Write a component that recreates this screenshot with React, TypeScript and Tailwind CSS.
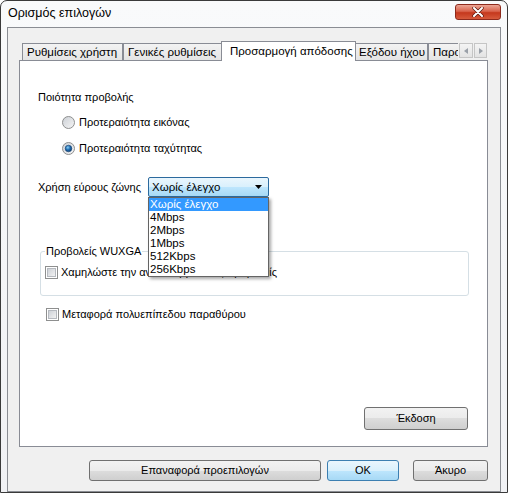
import React from 'react';

const font = "font-['Liberation_Sans','Noto_Sans',sans-serif]";

function Radio({ checked }: { checked?: boolean }) {
  return (
    <svg width="13" height="13" viewBox="0 0 13 13">
      <defs>
        <linearGradient id={checked ? 'rg1' : 'rg0'} x1="0" y1="0" x2="1" y2="1">
          <stop offset="0" stopColor="#cbcfd5" />
          <stop offset="1" stopColor="#f6f6f6" />
        </linearGradient>
        <radialGradient id="dot" cx="0.4" cy="0.35" r="0.7">
          <stop offset="0" stopColor="#8ad0f5" />
          <stop offset="0.5" stopColor="#1f6bb0" />
          <stop offset="1" stopColor="#0c3f75" />
        </radialGradient>
      </defs>
      <circle cx="6.5" cy="6.5" r="6" fill={`url(#${checked ? 'rg1' : 'rg0'})`} stroke="#8e8f8f" strokeWidth="1" />
      {checked && <circle cx="6.5" cy="6.5" r="3.3" fill="url(#dot)" stroke="#17406d" strokeWidth="0.6" />}
    </svg>
  );
}

function Checkbox() {
  return (
    <svg width="13" height="13" viewBox="0 0 13 13">
      <defs>
        <linearGradient id="cb" x1="0" y1="0" x2="1" y2="1">
          <stop offset="0" stopColor="#cbcfd5" />
          <stop offset="1" stopColor="#f4f4f4" />
        </linearGradient>
      </defs>
      <rect x="0.5" y="0.5" width="12" height="12" fill="#fff" stroke="#8e8f8f" />
      <rect x="2.5" y="2.5" width="8" height="8" fill="url(#cb)" stroke="#b5b9bf" strokeWidth="1" />
    </svg>
  );
}

function Button({ label, def, className }: { label: string; def?: boolean; className: string }) {
  return (
    <div
      className={`flex items-center justify-center rounded-[3px] border text-[11px] text-black ${
        def
          ? 'border-[#3c7fb1] bg-[linear-gradient(#eaf6fd_0%,#d9f0fc_50%,#bee6fd_50%,#a7d9f5_100%)]'
          : 'border-[#707070] bg-[linear-gradient(#f2f2f2_0%,#ebebeb_50%,#dddddd_50%,#cfcfcf_100%)]'
      } ${className}`}
    >
      {label}
    </div>
  );
}

const tabs = ['Ρυθμίσεις χρήστη', 'Γενικές ρυθμίσεις', 'Προσαρμογή απόδοσης', 'Εξόδου ήχου', 'Παρουσίαση'];
const widths = ['w-[101px]', 'w-[100px]', 'w-[135px]', 'w-[74px]', 'w-[80px]'];
const options = ['Χωρίς έλεγχο', '4Mbps', '2Mbps', '1Mbps', '512Kbps', '256Kbps'];

export default function App() {
  return (
    <div className={`${font} w-[508px] h-[493px] flex flex-col rounded-t-[7px] border border-[#3a3a3a] bg-[linear-gradient(#f9fafb,#f0f1f4)] text-black`}>
      {/* title bar */}
      <div className="h-[26px] flex items-start justify-between shrink-0">
        <div className="pl-[7px] pt-[5px] text-[12.5px] leading-[15px]">Ορισμός επιλογών</div>
        <div className="mt-[3px] mr-[6px] w-[46px] h-[16px] rounded-[3px] border border-[#8d2a1c] bg-[linear-gradient(#eba595_0%,#d9634c_45%,#c5381d_55%,#d65a3c_100%)] flex items-center justify-center">
          <svg width="12" height="10" viewBox="0 0 12 10">
            <path d="M2 1 L10 9 M10 1 L2 9" stroke="#5b1a10" strokeWidth="3.4" strokeLinecap="round" />
            <path d="M2 1 L10 9 M10 1 L2 9" stroke="#ffffff" strokeWidth="2" strokeLinecap="round" />
          </svg>
        </div>
      </div>

      {/* client area */}
      <div className="mx-[6px] flex-1 border border-[#8a8d93] bg-[#f0f0f0] pl-[11px] pr-[12px] pt-[13px] pb-[5px] flex flex-col">
        {/* tab strip */}
        <div className="relative z-10 -mb-[1px] h-[20px] flex items-start">
          <div className="ml-[3px] w-[436px] h-[20px] flex overflow-hidden text-[11.5px] leading-[15px]">
            {tabs.map((t, i) =>
              i === 2 ? (
                <div
                  key={t}
                  className={`${widths[i]} shrink-0 -mx-[2px] h-[20px] border border-b-0 border-[#898c95] bg-white flex items-center pl-[8px] whitespace-nowrap relative`}
                >
                  {t}
                </div>
              ) : (
                <div
                  key={t}
                  className={`${widths[i]} shrink-0 mt-[2px] h-[18px] border border-[#898c95] bg-[linear-gradient(#f3f3f3,#e4e4e4)] flex items-center pl-[4px] whitespace-nowrap overflow-hidden`}
                >
                  {t}
                </div>
              )
            )}
          </div>
          <div className="ml-[1px] mt-[2px] flex gap-[1px]">
            <div className="w-[14px] h-[15px] border border-[#c5c5c5] bg-[linear-gradient(#f4f4f4,#e3e3e3)] flex items-center justify-center">
              <svg width="4" height="6" viewBox="0 0 4 6"><path d="M4 0 L0 3 L4 6 Z" fill="#9aa0a8" /></svg>
            </div>
            <div className="w-[13px] h-[15px] border border-[#c5c5c5] bg-[linear-gradient(#f4f4f4,#e3e3e3)] flex items-center justify-center">
              <svg width="4" height="6" viewBox="0 0 4 6"><path d="M0 0 L4 3 L0 6 Z" fill="#9aa0a8" /></svg>
            </div>
          </div>
        </div>

        {/* tab panel */}
        <div className="h-[387px] border border-[#898c95] bg-white flex flex-col text-[11px] leading-[15px]">
          <div className="mt-[29px] pl-[18px] h-[15px]">Ποιότητα προβολής</div>
          <div className="mt-[10px] pl-[42px] h-[15px] flex items-center gap-[4px]">
            <Radio />
            <span>Προτεραιότητα εικόνας</span>
          </div>
          <div className="mt-[11px] pl-[42px] h-[15px] flex items-center gap-[4px]">
            <Radio checked />
            <span>Προτεραιότητα ταχύτητας</span>
          </div>

          <div className="mt-[21px] pl-[18px] h-[20px] flex items-center">
            <span className="w-[110px] whitespace-nowrap">Χρήση εύρους ζώνης</span>
            <div className="relative z-20">
              <div className="w-[121px] h-[20px] rounded-[2px] border border-[#2c6a9e] bg-[linear-gradient(#eaf6fd_0%,#d9f0fc_50%,#bee6fd_50%,#a7d9f5_100%)] flex items-center justify-between pl-[3px] pr-[6px] text-[11.5px]">
                <span>Χωρίς έλεγχο</span>
                <svg width="7" height="4" viewBox="0 0 7 4"><path d="M0 0 L7 0 L3.5 4 Z" fill="#000" /></svg>
              </div>
              <div className="absolute left-0 top-[20px] w-[121px] border border-[#646464] bg-white shadow-[2px_2px_3px_rgba(0,0,0,0.35)] text-[11.5px]">
                {options.map((o, i) => (
                  <div
                    key={o}
                    className={`h-[13px] leading-[13px] pl-[1px] ${i === 0 ? 'bg-[#3399ff] text-white' : ''}`}
                  >
                    {o}
                  </div>
                ))}
              </div>
            </div>
          </div>

          <fieldset className="mt-[47px] ml-[20px] mr-[18px] border border-[#d5dfe5] rounded-[3px] pl-[4px] pb-[15px]">
            <legend className="px-[1px] h-[15px]">Προβολείς WUXGA</legend>
            <div className="mt-[6px] h-[15px] flex items-center gap-[3px]">
              <Checkbox />
              <span className="whitespace-nowrap">Χαμηλώστε την ανάλυση για τους προβολείς</span>
            </div>
          </fieldset>

          <div className="mt-[11px] ml-[26px] h-[15px] flex items-center gap-[3px]">
            <Checkbox />
            <span>Μεταφορά πολυεπίπεδου παραθύρου</span>
          </div>

          <div className="flex-1" />
          <div className="flex justify-end mr-[19px] mb-[16px]">
            <Button label="Έκδοση" className="w-[104px] h-[23px]" />
          </div>
        </div>

        {/* bottom buttons */}
        <div className="mt-[13px] flex justify-end">
          <Button label="Επαναφορά προεπιλογών" className="w-[232px] h-[21px]" />
          <Button label="OK" def className="ml-[6px] w-[72px] h-[21px]" />
          <Button label="Άκυρο" className="ml-[14px] w-[75px] h-[21px]" />
        </div>
      </div>
    </div>
  );
}
